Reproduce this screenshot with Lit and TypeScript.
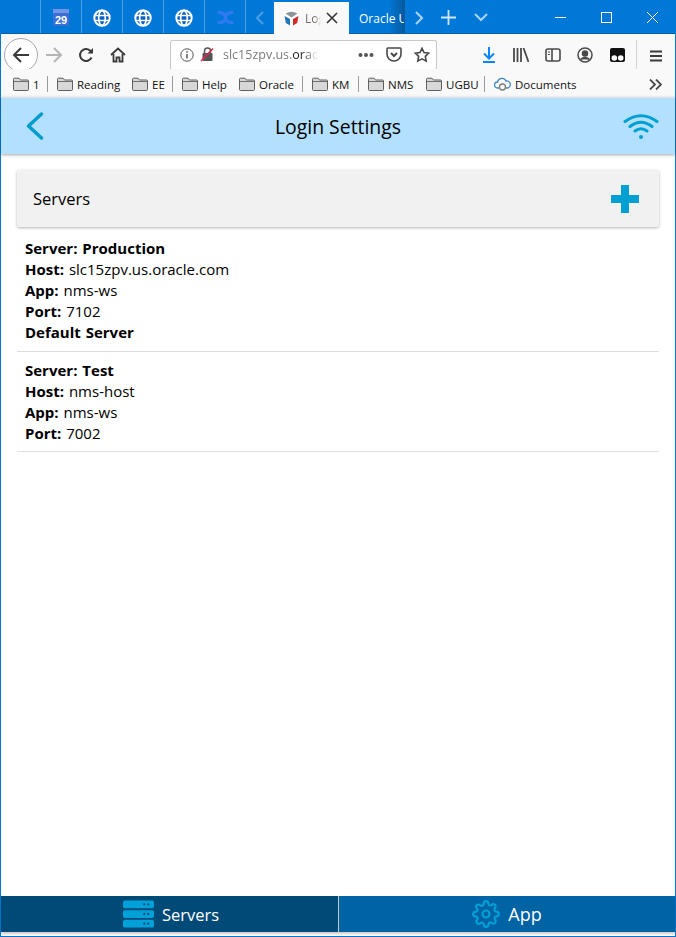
import { LitElement, html, css, svg } from "lit";
import { customElement } from "lit/decorators.js";

const globe = svg`<svg width="18" height="18" viewBox="0 0 18 18" fill="none" stroke="#fff" stroke-width="1.700"><circle cx="9" cy="9" r="7.700" fill="#0a63c2" stroke-width="2"/><ellipse cx="9" cy="9" rx="3.300" ry="7.400"/><path d="M2 6.500h14M2 11.500h14"/></svg>`;
const folder = svg`<svg width="16" height="14" viewBox="0 0 16 14"><path d="M.5 12.500V2.200Q.5 1.200 1.500 1.200H6L7.500 3H14.500Q15.500 3 15.500 4V12.500Q15.500 13.500 14.500 13.500H1.500Q.5 13.500.5 12.500Z" fill="#d8d8d8" stroke="#5f5f5f"/><path d="M1 4.500H15" stroke="#6f6f6f"/></svg>`;

@customElement("app-root")
export class AppRoot extends LitElement {
  static styles = css`
    :host { display: block; width: 676px; height: 937px; font-family: "Open Sans", "Noto Sans", sans-serif; color: #000; overflow: hidden; }
    .window { box-sizing: border-box; width: 676px; height: 937px; display: flex; flex-direction: column; border: solid #0078d7; border-width: 0 1px 1px 1px; background: #fff; }
    .tabs { height: 34px; flex: none; background: #0078d7; display: flex; align-items: stretch; border-bottom: 1px solid #0a5fa8; box-sizing: border-box; }
    .lead { width: 39px; flex: none; }
    .pin { width: 41px; flex: none; box-sizing: border-box; border-left: 1px solid #4ba0e3; display: flex; align-items: center; justify-content: center; padding-top: 2px; }
    .ctl { flex: none; display: flex; align-items: center; justify-content: center; padding-top: 2px; }
    .scroll { width: 29px; box-sizing: border-box; border-left: 1px solid #4ba0e3; }
    .w28 { width: 28px; } .w30 { width: 30px; } .w34 { width: 36px; } .w46 { width: 46px; }
    .active { width: 75px; flex: none; height: 32px; background: #f9f9fa; display: flex; align-items: center; box-sizing: border-box; padding-left: 9px; margin-top: 2px; position: relative; z-index: 1; }
    .active .t { font-size: 12px; color: #7d6a6a; margin-left: 5px; width: 16px; overflow: hidden; white-space: nowrap; -webkit-mask-image: linear-gradient(90deg, #000 60%, transparent); mask-image: linear-gradient(90deg, #000 60%, transparent); }
    .active .x { margin-left: 5px; display: flex; }
    .other { width: 56px; flex: none; box-sizing: border-box; padding: 3px 0 0 10px; display: flex; align-items: center; color: #fff; font-size: 12px; white-space: nowrap; overflow: hidden; border-right: 1px solid #075a9e; background: linear-gradient(90deg, #0078d7 72%, #075a9e 100%); }
    .spring { flex: 1; }
    .toolbar { height: 35px; flex: none; background: #f9f9fa; display: flex; align-items: center; box-sizing: border-box; padding-top: 6px; }
    .backbtn { width: 34px; height: 34px; flex: none; box-sizing: border-box; margin-left: 3px; border: 1px solid #a8a8a8; border-radius: 50%; background: #fff; display: flex; align-items: center; justify-content: center; }
    .tb { flex: none; width: 32px; display: flex; align-items: center; justify-content: center; }
    .urlbar { flex: none; margin-left: 36px; width: 267px; height: 30px; box-sizing: border-box; border: 1px solid #c8c8c8; border-radius: 2px; background: #fff; display: flex; align-items: center; padding-left: 9px; }
    .lock { margin-left: 6px; }
    .url { width: 97px; margin-left: 8px; font-size: 12.5px; color: #7b7b7b; white-space: nowrap; overflow: hidden; -webkit-mask-image: linear-gradient(90deg, #000 80%, transparent); mask-image: linear-gradient(90deg, #000 80%, transparent); }
    .url b { font-weight: 400; color: #222; }
    .urlicons { display: flex; align-items: center; margin-left: 32px; }
    .urlicons span { width: 28px; display: flex; justify-content: center; }
    .dl { margin-left: 36px; }
    .tbdiv { width: 1px; height: 30px; background: #d4d4d4; flex: none; margin: 0 13px 0 3px; }
    .bookmarks { height: 28px; flex: none; background: #f9f9fa; display: flex; align-items: center; padding: 2px 0 0 12px; font-size: 11.500px; color: #111; box-sizing: border-box; }
    .bm { display: flex; align-items: center; gap: 4px; white-space: nowrap; flex: none; }
    .bdiv { width: 1px; height: 16px; background: #9a9a9a; flex: none; margin-right: 9px; }
    .more { margin-right: 13px; }
    .appbar { height: 57px; flex: none; background: #b3e0ff; display: flex; align-items: center; justify-content: space-between; box-shadow: 0 1px 3px rgba(0,0,0,.35); border-top: 1px solid #dfe6ea; box-sizing: border-box; padding: 0 16px 0 24px; position: relative; }
    .appbar h1 { font-size: 19.400px; font-weight: 400; margin: 0; position: absolute; left: 0; right: 0; text-align: center; }
    .appbar svg { position: relative; }
    .content { flex: 1; padding: 16px 16px 0; min-height: 0; }
    .card { height: 57px; margin-bottom: 3px; background: #f1f1f1; box-shadow: 0 1px 3px rgba(0,0,0,.3); border-radius: 2px; display: flex; align-items: center; justify-content: space-between; padding: 0 20px 0 16px; font-size: 16.500px; }
    .server { padding: 8px; border-bottom: 1px solid #dedede; font-size: 15px; line-height: 21px; word-spacing: 1px; }
    .server:last-child { padding-bottom: 7px; }
    .server div { white-space: nowrap; }
    .server b { font-weight: 700; }
    .footer { height: 36px; flex: none; display: flex; color: #fff; font-size: 16.500px; margin-bottom: 4px; box-shadow: 0 2px 2px rgba(0,0,0,.2); }
    .ftab { flex: 1; display: flex; align-items: center; justify-content: center; gap: 8px; background: #0063a3; }
    .ftab.on { flex: 0 0 338px; background: #004a78; border-right: 1px solid #c6c6c6; box-sizing: border-box; padding-left: 3px; }
    .ftab .app { font-size: 18px; }
  `;

  private server(name: string, host: string, app: string, port: string, def: boolean) {
    return html`<div class="server">
      <div><b>Server: ${name}</b></div>
      <div><b>Host:</b> ${host}</div>
      <div><b>App:</b> ${app}</div>
      <div><b>Port:</b> ${port}</div>
      ${def ? html`<div><b>Default Server</b></div>` : ""}
    </div>`;
  }

  private bm(label: string, w: number) {
    return html`<div class="bm" style="width:${w}px">${folder}<span>${label}</span></div>`;
  }

  render() {
    return html`<div class="window">
      <div class="tabs">
        <div class="lead"></div>
        <div class="pin"><svg width="16" height="17" viewBox="0 0 16 17"><rect width="16" height="17" fill="#3b6fd4"/><rect width="16" height="4" fill="#6f97e6"/><text x="8" y="14.500" text-anchor="middle" font-size="11" font-weight="700" fill="#fff" font-family="Liberation Sans">29</text></svg></div>
        <div class="pin">${globe}</div>
        <div class="pin">${globe}</div>
        <div class="pin">${globe}</div>
        <div class="pin"><svg width="17" height="15" viewBox="0 0 18 16" fill="none" stroke="#2f7af2" stroke-width="3.500" stroke-linecap="round"><path d="M2 2.500Q9 3 9 8T2 13.500M16 2.500Q9 3 9 8T16 13.500"/></svg></div>
        <div class="ctl scroll"><svg width="10" height="16" viewBox="0 0 10 16" fill="none" stroke="#4ba0e3" stroke-width="2"><path d="M8 2L2 8l6 6"/></svg></div>
        <div class="active">
          <svg width="17" height="17" viewBox="0 0 17 17"><path d="M8.500.5L15 2.500 16.500 6 15 13 8.500 16.500 2 13 .5 6 2 2.500Z" fill="#fff"/><path d="M2.500 3.500Q8.500 0 14.500 3.500L8.500 7.500Z" fill="#8d9499"/><path d="M1.500 6L7 9V15.500L2.800 13Z" fill="#2474b8"/><path d="M15.500 6L10 9V15.500L14.200 13Z" fill="#d22a2a"/></svg>
          <span class="t">Login</span>
          <span class="x"><svg width="12" height="12" viewBox="0 0 12 12" stroke="#333" stroke-width="1.600"><path d="M1 1l10 10M11 1L1 11"/></svg></span>
        </div>
        <div class="other">Oracle UGBU</div>
        <div class="ctl w28"><svg width="10" height="16" viewBox="0 0 10 16" fill="none" stroke="#a9d4f5" stroke-width="2"><path d="M2 2l6 6-6 6"/></svg></div>
        <div class="ctl w30"><svg width="15" height="15" viewBox="0 0 15 15" stroke="#cfe6f8" stroke-width="1.800"><path d="M7.500 0v15M0 7.500h15"/></svg></div>
        <div class="ctl w34"><svg width="14" height="9" viewBox="0 0 14 9" fill="none" stroke="#a9d4f5" stroke-width="2"><path d="M1 1l6 6 6-6"/></svg></div>
        <div class="spring"></div>
        <div class="ctl w46"><svg width="11" height="11" viewBox="0 0 11 11" stroke="#fff"><path d="M0 5.500h11"/></svg></div>
        <div class="ctl w46"><svg width="11" height="11" viewBox="0 0 11 11" fill="none" stroke="#fff"><rect x=".5" y=".5" width="10" height="10"/></svg></div>
        <div class="ctl w46"><svg width="11" height="11" viewBox="0 0 11 11" stroke="#fff"><path d="M0 0l11 11M11 0L0 11"/></svg></div>
      </div>

      <div class="toolbar">
        <div class="backbtn"><svg width="18" height="16" viewBox="0 0 18 16" fill="none" stroke="#3a3a3a" stroke-width="2"><path d="M17 8H2M9 1L2 8l7 7"/></svg></div>
        <div class="tb"><svg width="18" height="16" viewBox="0 0 18 16" fill="none" stroke="#b5b5b5" stroke-width="2"><path d="M1 8h15M9 1l7 7-7 7"/></svg></div>
        <div class="tb"><svg width="16" height="16" viewBox="0 0 16 16" fill="none" stroke="#3a3a3a" stroke-width="2"><path d="M13.500 10.500A6 6 0 1 1 12 3.500L14 5.500"/><path d="M15 1v5.500H9.500" fill="#3a3a3a" stroke="none"/></svg></div>
        <div class="tb"><svg width="16" height="16" viewBox="0 0 16 16" fill="none" stroke="#3a3a3a" stroke-width="1.800"><path d="M1 8l7-6.500L15 8"/><path d="M3.500 7v7.500h3v-4h3v4h3V7"/></svg></div>
        <div class="urlbar">
          <svg width="14" height="14" viewBox="0 0 14 14" fill="none" stroke="#555"><circle cx="7" cy="7" r="6.200"/><path d="M7 6v4.500M7 3.200v1.600" stroke-width="1.500"/></svg>
          <svg class="lock" width="15" height="15" viewBox="0 0 15 15"><rect x="2.500" y="6" width="10" height="8" rx="1" fill="#555"/><path d="M4.500 6V4a3 3 0 0 1 6 0v2" fill="none" stroke="#555" stroke-width="1.500"/><path d="M1 14L13 1.500" stroke="#e22850" stroke-width="1.600"/></svg>
          <div class="url">slc15zpv.us.<b>ora</b>cle.com</div>
          <div class="urlicons">
            <span><svg width="16" height="4" viewBox="0 0 16 4" fill="#555"><circle cx="2.500" cy="2" r="2"/><circle cx="8" cy="2" r="2"/><circle cx="13.500" cy="2" r="2"/></svg></span>
            <span><svg width="16" height="15" viewBox="0 0 16 15" fill="none" stroke="#4a4a4a" stroke-width="1.600"><path d="M1.800 1h12.400Q15 1 15 2V7A7 7 0 0 1 1 7V2Q1 1 1.800 1Z"/><path d="M5 6l3 3 3-3" stroke-width="2"/></svg></span>
            <span><svg width="16" height="16" viewBox="0 0 16 16" fill="none" stroke="#4a4a4a" stroke-width="1.600"><path d="M8 1.300l2 4.300 4.700.6-3.400 3.200.9 4.700L8 11.800l-4.200 2.300.9-4.700L1.300 6.200 6 5.600Z"/></svg></span>
          </div>
        </div>
        <div class="tb dl"><svg width="14" height="16" viewBox="0 0 14 16" fill="none" stroke="#0a84ff" stroke-width="2"><path d="M7 0v11M2 6.500L7 11.500l5-5M1 15h12"/></svg></div>
        <div class="tb"><svg width="16" height="14" viewBox="0 0 16 14" fill="none" stroke="#4a4a4a" stroke-width="1.800"><path d="M1 0v14M4.500 0v14M8 0v14M10.500 0l5 14"/></svg></div>
        <div class="tb"><svg width="16" height="14" viewBox="0 0 16 14" fill="none" stroke="#4a4a4a" stroke-width="1.600"><rect x="1" y="1" width="14" height="12" rx="2"/><path d="M7 1v12"/><path d="M3 4h2M3 6.500h2" stroke-width="1.200"/></svg></div>
        <div class="tb"><svg width="16" height="16" viewBox="0 0 16 16" fill="none" stroke="#4a4a4a" stroke-width="1.500"><circle cx="8" cy="8" r="7"/><circle cx="8" cy="6.500" r="2.500" fill="#4a4a4a"/><path d="M3.500 12.500Q8 8.500 12.500 12.500" fill="#4a4a4a"/></svg></div>
        <div class="tb"><svg width="15" height="14" viewBox="0 0 15 14"><path d="M2 0h11q2 0 2 2v10q0 2-2 2H2q-2 0-2-2V2q0-2 2-2Z" fill="#111"/><circle cx="4.300" cy="10" r="2.800" fill="#fff"/><circle cx="10.700" cy="10" r="2.800" fill="#fff"/></svg></div>
        <div class="tbdiv"></div>
        <div class="ctl"><svg width="12" height="12" viewBox="0 0 12 12" stroke="#3a3a3a" stroke-width="1.800"><path d="M0 1.500h12M0 6h12M0 10.500h12"/></svg></div>
      </div>

      <div class="bookmarks">
        ${this.bm("1", 34)}<div class="bdiv"></div>
        ${this.bm("Reading", 75)}
        ${this.bm("EE", 40)}<div class="bdiv"></div>
        ${this.bm("Help", 57)}
        ${this.bm("Oracle", 63)}<div class="bdiv"></div>
        ${this.bm("KM", 46)}<div class="bdiv"></div>
        ${this.bm("NMS", 58)}
        ${this.bm("UGBU", 58)}<div class="bdiv"></div>
        <div class="bm"><svg width="17" height="14" viewBox="0 0 17 14" fill="none" stroke="#3d86c6" stroke-width="1.300"><path d="M5 11H3.500a3 3 0 0 1 0-6 4.500 4.500 0 0 1 8.500-1 3.500 3.500 0 0 1 1.500 7H12"/><circle cx="8.500" cy="10" r="3" stroke="#7a7a7a"/></svg><span>Documents</span></div>
        <div class="spring"></div>
        <svg class="more" width="13" height="11" viewBox="0 0 13 11" fill="none" stroke="#4a4a4a" stroke-width="1.800"><path d="M1 .5l5 5-5 5M7 .5l5 5-5 5"/></svg>
      </div>

      <div class="appbar">
        <h1>Login Settings</h1>
        <svg width="20" height="30" viewBox="0 0 20 30" fill="none" stroke="#009ccc" stroke-width="3.500" stroke-linecap="round" stroke-linejoin="round"><path d="M16.500 3L3.500 15l13 12"/></svg>
        <svg width="36" height="28" viewBox="0 0 36 28" fill="none" stroke="#00a0d2" stroke-width="3" stroke-linecap="round"><path d="M2 9.500Q18-2 34 9.500M7 14.500Q18 6 29 14.500M12 19Q18 14.500 24 19"/><circle cx="18" cy="25" r="2" fill="#00a0d2" stroke="none"/></svg>
      </div>

      <div class="content">
        <div class="card">
          <span>Servers</span>
          <svg width="28" height="28" viewBox="0 0 28 28" fill="#00a0d2"><path d="M10 0h8v10h10v8H18v10h-8V18H0v-8h10Z"/></svg>
        </div>
        ${this.server("Production", "slc15zpv.us.oracle.com", "nms-ws", "7102", true)}
        ${this.server("Test", "nms-host", "nms-ws", "7002", false)}
      </div>

      <div class="footer">
        <div class="ftab on">
          <svg width="31" height="28" viewBox="0 0 32 28"><g fill="#00a0d8"><rect width="32" height="8" rx="2"/><rect y="10" width="32" height="8" rx="2"/><rect y="20" width="32" height="8" rx="2"/></g><g fill="#00507f"><circle cx="22" cy="4" r="1.200"/><circle cx="26" cy="4" r="1.200"/><circle cx="22" cy="14" r="1.200"/><circle cx="26" cy="14" r="1.200"/><circle cx="22" cy="24" r="1.200"/><circle cx="26" cy="24" r="1.200"/></g></svg>
          <span>Servers</span>
        </div>
        <div class="ftab">
          <svg width="28" height="28" viewBox="0 0 24 24" fill="none" stroke="#00a0d8" stroke-width="1.800" stroke-linejoin="round"><circle cx="12" cy="12" r="3"/><path d="M19.400 15a1.650 1.650 0 0 0 .33 1.820l.06.06a2 2 0 1 1-2.830 2.830l-.06-.06a1.650 1.650 0 0 0-2.800 1.170V21a2 2 0 0 1-4 0v-.09a1.650 1.650 0 0 0-2.800-1.120l-.06.06a2 2 0 1 1-2.830-2.830l.06-.06a1.650 1.650 0 0 0-1.170-2.800H3a2 2 0 0 1 0-4h.09a1.650 1.650 0 0 0 1.120-2.800l-.06-.06a2 2 0 1 1 2.830-2.830l.06.06a1.650 1.650 0 0 0 1.820.33H9a1.650 1.650 0 0 0 1-1.510V3a2 2 0 0 1 4 0v.09a1.650 1.650 0 0 0 2.800 1.120l.06-.06a2 2 0 1 1 2.830 2.830l-.06.06a1.650 1.650 0 0 0-.33 1.820V9a1.650 1.650 0 0 0 1.510 1H21a2 2 0 0 1 0 4h-.09a1.650 1.650 0 0 0-1.510 1Z"/></svg>
          <span class="app">App</span>
        </div>
      </div>
    </div>`;
  }
}
